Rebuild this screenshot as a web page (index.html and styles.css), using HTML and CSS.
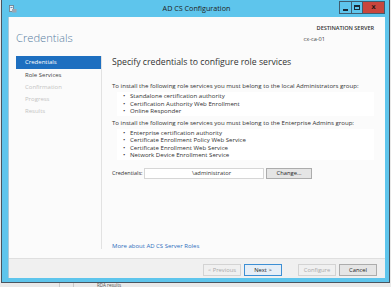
FILE: index.html
```html
<!DOCTYPE html>
<html>
<head>
<meta charset="utf-8">
<link rel="stylesheet" href="styles.css">
</head>
<body>
<div class="window">
  <div class="titlebar">
    <svg class="appicon" width="8" height="8" viewBox="0 0 8 8">
      <rect x="0.5" y="0.5" width="4" height="6" fill="#e8eef4" stroke="#6c7a88" stroke-width="0.8"/>
      <rect x="3" y="4" width="4.5" height="3.5" fill="#9aa6b2"/>
      <rect x="1.5" y="2" width="2" height="0.8" fill="#3b6fa8"/>
    </svg>
    <div class="title">AD CS Configuration</div>
    <div class="controls">
      <div class="cbtn min"><span class="minbar"></span></div>
      <div class="cbtn max"><span class="maxbox"></span></div>
      <div class="cbtn close">x</div>
    </div>
  </div>
  <div class="client">
    <div class="header">
      <div class="pagetitle">Credentials</div>
      <div class="dest">
        <div class="destlabel">DESTINATION SERVER</div>
        <div class="destname">cx-ca-01</div>
      </div>
    </div>
    <div class="main">
      <nav class="nav">
        <div class="navitem selected">Credentials</div>
        <div class="navitem">Role Services</div>
        <div class="navitem disabled">Confirmation</div>
        <div class="navitem disabled">Progress</div>
        <div class="navitem disabled">Results</div>
      </nav>
      <div class="content">
        <div class="heading">Specify credentials to configure role services</div>
        <div class="para">To install the following role services you must belong to the local Administrators group:</div>
        <ul class="list">
          <li>Standalone certification authority</li>
          <li>Certification Authority Web Enrollment</li>
          <li>Online Responder</li>
        </ul>
        <div class="para second">To install the following role services you must belong to the Enterprise Admins group:</div>
        <ul class="list">
          <li>Enterprise certification authority</li>
          <li>Certificate Enrollment Policy Web Service</li>
          <li>Certificate Enrollment Web Service</li>
          <li>Network Device Enrollment Service</li>
        </ul>
        <div class="credrow">
          <span class="credlabel">Credentials:</span>
          <div class="input"><span>\administrator</span></div>
          <div class="btn change">Change...</div>
        </div>
        <div class="spacer"></div>
        <a class="link">More about AD CS Server Roles</a>
      </div>
    </div>
    <div class="footer">
      <div class="btn off">&lt; Previous</div>
      <div class="btn next">Next &gt;</div>
      <div class="btn off gap">Configure</div>
      <div class="btn">Cancel</div>
    </div>
  </div>
</div>
<div class="behind">
  <span class="vline a"></span><span class="vline b"></span>
  <span class="behindtext">RDA results</span>
</div>
</body>
</html>
```
FILE: styles.css
```css
* { box-sizing: border-box; margin: 0; padding: 0; }
html, body { width: 391px; height: 287px; overflow: hidden; }
body {
  background: #e9e9e9;
  font-family: "Open Sans", "Noto Sans", sans-serif;
  color: #333;
  padding-left: 1px;
}
.window {
  width: 389px;
  height: 283px;
  background: #5ec5ec;
  border: 1px solid #4a5560;
  border-top: none;
  padding: 0 4px 4px 6px;
  display: flex;
  flex-direction: column;
}
.titlebar {
  height: 17px;
  display: flex;
  align-items: flex-start;
  position: relative;
}
.appicon { margin: 5px 0 0 1px; }
.title {
  position: absolute;
  left: 0; right: 0; top: 4px;
  text-align: center;
  font-size: 7.2px;
  line-height: 9px;
  color: #222;
}
.controls {
  margin-left: auto;
  display: flex;
  margin-top: 1px;
}
.cbtn {
  height: 13px;
  border: 1px solid #3f5d70;
  display: flex;
  align-items: center;
  justify-content: center;
}
.min { width: 12px; border-right: none; }
.max { width: 12px; }
.close {
  width: 22px;
  background: #c9463d;
  border-left: none;
  font-family: "DejaVu Sans", sans-serif;
  font-weight: bold;
  font-size: 7px;
  color: #2a1a18;
  line-height: 1;
}
.minbar { width: 5px; height: 2px; background: #1a2a36; margin-top: 4px; }
.maxbox { width: 6px; height: 5px; border: 1px solid #1a2a36; border-top-width: 2px; }

.client {
  flex: 1;
  background: #fbfbfb;
  display: flex;
  flex-direction: column;
  border-left: 1px solid #a9c9d8;
}
.header {
  display: flex;
  justify-content: space-between;
  height: 39px;
  padding: 8px 11px 0 7px;
}
.pagetitle {
  font-size: 11.2px;
  font-weight: 300;
  color: #5a7fa3;
  line-height: 16px;
  margin-top: 5px;
}
.dest { text-align: right; }
.destlabel {
  font-size: 5.6px;
  font-weight: 600;
  color: #333;
  line-height: 7px;
  letter-spacing: -0.05px;
}
.destname {
  font-size: 5.6px;
  color: #444;
  line-height: 7px;
  margin-top: 4px;
  margin-right: 49px;
}
.main {
  flex: 1;
  display: flex;
  padding-left: 7px;
}
.nav {
  width: 86px;
  border-right: 1px solid #e2e2e2;
  margin-bottom: 9px;
}
.navitem {
  height: 12px;
  line-height: 12px;
  font-size: 6px;
  padding-left: 9px;
  color: #444;
}
.navitem.selected { background: #1e6fc0; color: #fff; height: 13px; line-height: 13px; }
.navitem.disabled { color: #c4c4c4; }
.content {
  flex: 1;
  padding: 0 11px 0 10px;
  display: flex;
  flex-direction: column;
}
.heading {
  font-size: 8.7px;
  line-height: 13px;
  color: #333;
}
.para {
  font-size: 6.1px;
  line-height: 7px;
  margin-top: 13px;
  color: #333;
  white-space: nowrap;
}
.para.second { margin-top: 3px; }
.list {
  list-style: none;
  background: #fff;
  margin: 3px 0 0 5px;
  padding: 0 0 1px 6px;
}
.list li {
  font-size: 6.1px;
  line-height: 7.5px;
  color: #333;
  position: relative;
  padding-left: 7px;
}
.list li::before {
  content: "•";
  position: absolute;
  left: 0;
}
.credrow {
  display: flex;
  align-items: center;
  margin-top: 8px;
  font-size: 5.8px;
}
.credlabel {
  width: 32px;
  flex-shrink: 0;
  white-space: nowrap;
  font-size: 5.5px;
  color: #333;
}
.input {
  width: 120px;
  flex-shrink: 0;
  height: 11px;
  border: 1px solid #d6d6d6;
  background: #fff;
  padding-left: 47px;
  line-height: 9px;
  color: #333;
}
.btn {
  width: 38px;
  height: 12px;
  border: 1px solid #acacac;
  background: #e5e5e5;
  font-size: 5.8px;
  line-height: 10px;
  text-align: center;
  color: #222;
  flex-shrink: 0;
}
.change { margin-left: 2px; width: 46px; height: 11px; line-height: 9px; }
.spacer { flex: 1; }
.link {
  font-size: 6px;
  line-height: 7px;
  color: #2e6fbd;
  margin-bottom: 8px;
}
.footer {
  height: 20px;
  background: #f0f0f0;
  border-top: 1px solid #dfdfdf;
  display: flex;
  align-items: flex-start;
  justify-content: flex-end;
  padding: 5px 8px 0 0;
  gap: 3px;
}
.btn.off { color: #a9a9a9; border-color: #d3d3d3; background: #f0f0f0; }
.btn.next { border-color: #3c8fd4; background: #e5eef7; }
.btn.gap { margin-left: 13px; }
.behind {
  position: relative;
  height: 4px;
}
.vline { position: absolute; top: 0; width: 1px; height: 4px; background: #c8c8c8; }
.vline.a { left: 58px; }
.vline.b { left: 72px; }
.behindtext {
  position: absolute;
  left: 96px;
  top: 0;
  font-size: 4.5px;
  line-height: 4px;
  color: #555;
}
```
